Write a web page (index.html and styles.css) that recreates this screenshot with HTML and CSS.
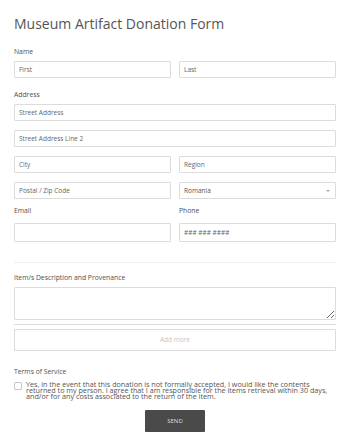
FILE: index.html
```html
<!DOCTYPE html>
<html lang="en">
<head>
  <meta charset="UTF-8">
  <title>Museum Artifact Donation Form</title>
  <link rel="stylesheet" href="styles.css">
</head>

<body>
  <form class="form">
    <h1 class="form-title">Museum Artifact Donation Form</h1>

    <div class="field">
      <label class="field-label">Name</label>
      <div class="row">
        <input class="input" type="text" placeholder="First">
        <input class="input" type="text" placeholder="Last">
      </div>
    </div>

    <div class="field">
      <label class="field-label">Address</label>
      <div class="stack">
        <input class="input" type="text" placeholder="Street Address">
        <input class="input" type="text" placeholder="Street Address Line 2">
        <div class="row">
          <input class="input" type="text" placeholder="City">
          <input class="input" type="text" placeholder="Region">
        </div>
        <div class="row">
          <input class="input" type="text" placeholder="Postal / Zip Code">
          <div class="select-wrap">
            <select class="input select">
              <option>Romania</option>
            </select>
          </div>
        </div>
      </div>
    </div>

    <div class="row field-contact">
      <div class="col">
        <label class="field-label">Email</label>
        <input class="input input-tall" type="email">
      </div>
      <div class="col">
        <label class="field-label">Phone</label>
        <input class="input input-tall" type="tel" placeholder="### ### ####">
      </div>
    </div>

    <div class="divider"></div>

    <div class="field field-items">
      <label class="field-label">Item/s Description and Provenance</label>
      <div class="items">
        <textarea class="input textarea"></textarea>
      </div>
      <div class="add-more">Add more</div>
    </div>

    <div class="field field-terms">
      <label class="field-label">Terms of Service</label>
      <label class="terms">
        <span class="checkbox"></span>
        <span class="terms-text">Yes, in the event that this donation is not formally accepted, I would like the contents returned to my person. I agree that I am responsible for the items retrieval within 30 days, and/or for any costs associated to the return of the item.</span>
      </label>
    </div>

    <div class="actions">
      <button class="btn-send" type="button">SEND</button>
    </div>
  </form>
</body>

</html>
```

FILE: styles.css
```css
* {
  margin: 0;
  padding: 0;
  box-sizing: border-box;
}

body {
  background: #fff;
  font-family: "Open Sans", "Liberation Sans", sans-serif;
  color: #555;
}

.form {
  padding: 14px 14px 0 14px;
}

.form-title {
  font-size: 14px;
  font-weight: 400;
  line-height: 20px;
  color: #555;
  margin-bottom: 14px;
}

.field {
  margin-bottom: 13px;
}

.field-label {
  display: block;
  font-size: 6.8px;
  line-height: 8px;
  color: #505050;
  margin-bottom: 5px;
}

.row {
  display: grid;
  grid-template-columns: 1fr 1fr;
  gap: 8px;
}

.stack {
  display: flex;
  flex-direction: column;
  gap: 9px;
}

.input {
  display: block;
  width: 100%;
  height: 17px;
  border: 1px solid #dcdcdc;
  border-radius: 1px;
  background: #fff;
  padding: 0 4px;
  font-family: "Open Sans", "Liberation Sans", sans-serif;
  font-size: 6.5px;
  color: #555;
  outline: none;
}

.input::placeholder {
  color: #666;
}

.input-tall {
  height: 19px;
}

.select-wrap {
  position: relative;
}

.select {
  appearance: none;
  -webkit-appearance: none;
}

.select-wrap::after {
  content: "";
  position: absolute;
  right: 6px;
  top: 8px;
  border-left: 2.5px solid transparent;
  border-right: 2.5px solid transparent;
  border-top: 2.5px solid #aaa;
}

.field-contact {
  margin-top: -5px;
}

.field-contact .field-label {
  margin-bottom: 8px;
}

.divider {
  height: 1px;
  background: #f0f0f0;
  margin: 20px 0 11px;
}

.items {
  border-bottom: 1px solid #dcdcdc;
  padding-bottom: 4px;
  margin-bottom: 4px;
}

.textarea {
  height: 33px;
  resize: vertical;
  padding: 3px 4px;
}

.add-more {
  height: 22px;
  border: 1px solid #dcdcdc;
  border-radius: 1px;
  text-align: center;
  line-height: 20px;
  font-size: 6.5px;
  color: #c4c4c4;
}

.field-terms {
  margin-top: 17px;
  margin-bottom: 0;
}

.field-terms .field-label {
  margin-bottom: 5px;
}

.terms {
  display: flex;
  align-items: flex-start;
  gap: 4px;
  padding-right: 4px;
}

.checkbox {
  flex: none;
  width: 8px;
  height: 8px;
  border: 1px solid #c8c8c8;
  border-radius: 1px;
  margin-top: 1px;
}

.terms-text {
  font-size: 7.2px;
  line-height: 6px;
  color: #555;
}

.actions {
  display: flex;
  justify-content: center;
  margin-top: 11px;
}

.btn-send {
  width: 60px;
  height: 22px;
  border: none;
  border-radius: 1px;
  background: #4a4a4a;
  color: #ddd;
  font-family: "Open Sans", "Liberation Sans", sans-serif;
  font-size: 6px;
}
```
